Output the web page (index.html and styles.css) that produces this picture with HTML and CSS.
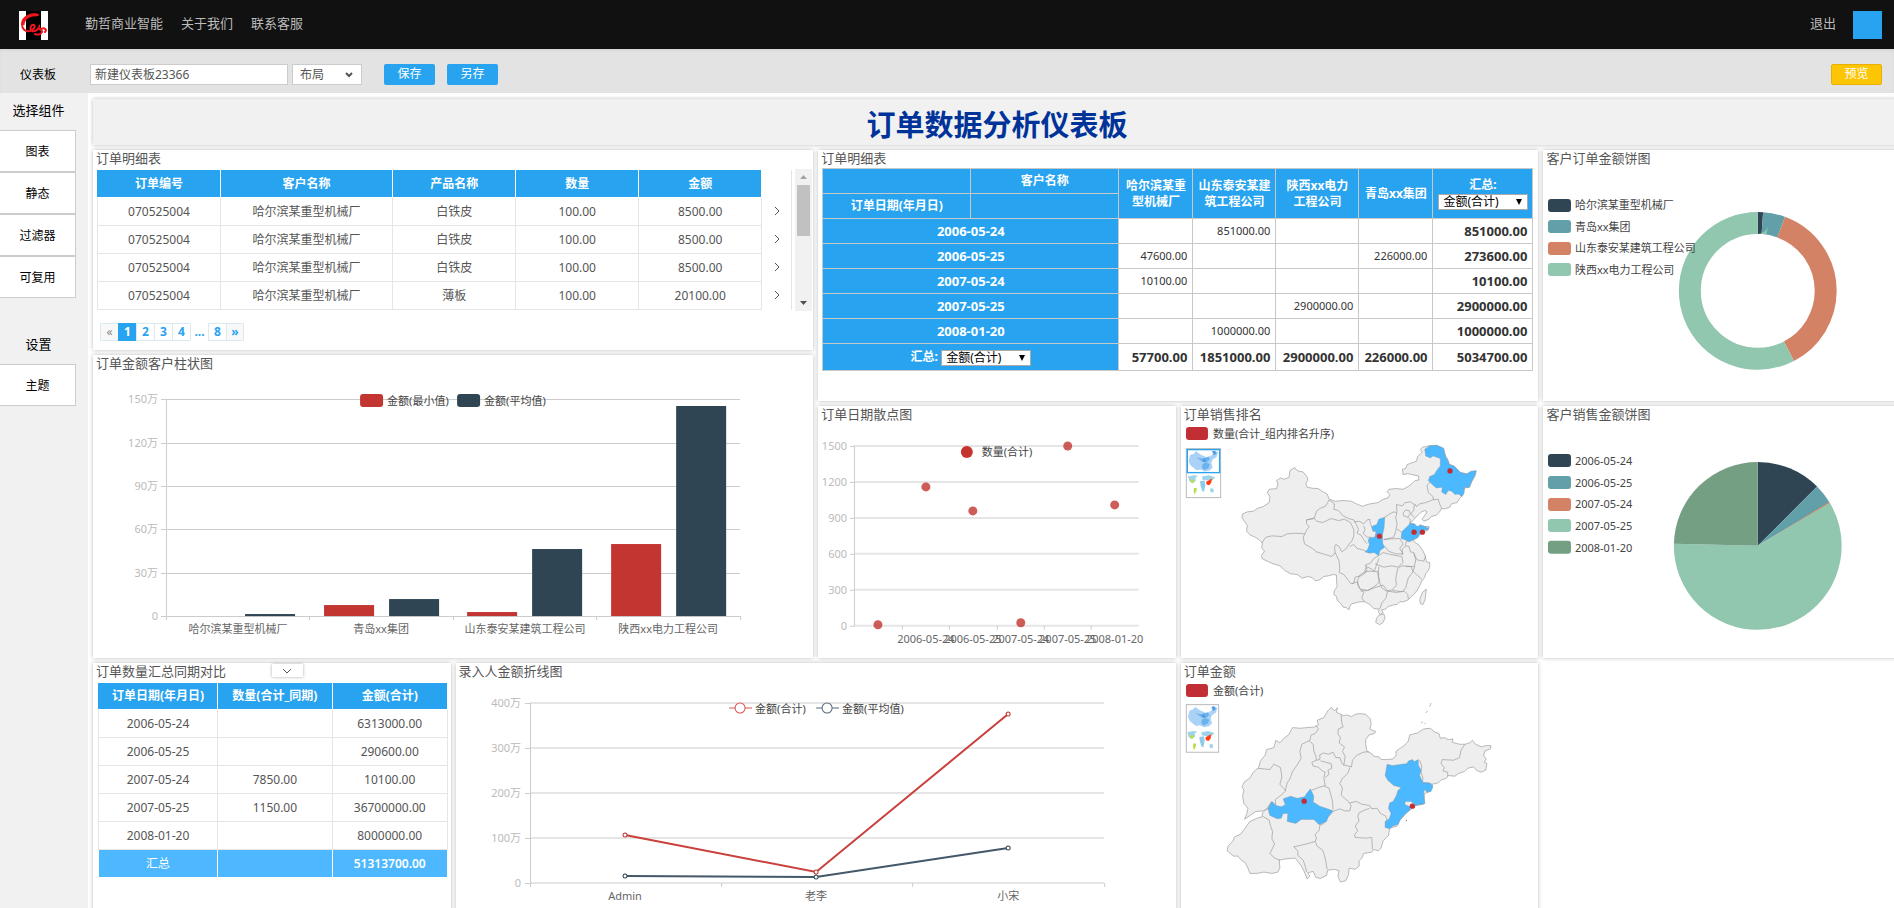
FILE: index.html
```html
<!DOCTYPE html>
<html lang="zh-CN">
<head>
    <meta charset="UTF-8">
    <meta name="viewport" content="width=device-width, initial-scale=1.0">
    <title>订单数据分析仪表板</title>
    <link rel="stylesheet" href="styles.css">
</head>
<body>
    <!-- Header -->
    <header class="topbar">
        <a class="logo" href="#" aria-label="首页">
            <svg width="29" height="29" viewBox="0 0 29 29">
                <rect width="29" height="29" fill="#fff"/>
                <rect x="7" width="15" height="29" fill="#000"/>
                <path d="M19 4C12 2 3 6 3 13C3 18 6 21 11 20C14 19 17 16 15 14C12 13 10 18 13 20C16 21 20 18 20 16C18 19 24 18 23 21C22 24 18 24 16 23M22 18C26 16 28 19 26 21" fill="none" stroke="#f0141c" stroke-width="2" stroke-linecap="round"/>
                <path d="M18 4C11 3 4 7 4 14" fill="none" stroke="#f0141c" stroke-width="3"/>
            </svg>
        </a>
        <nav class="topnav">
            <a href="#">勤哲商业智能</a>
            <a href="#">关于我们</a>
            <a href="#">联系客服</a>
        </nav>
        <a class="logout" href="#">退出</a>
        <span class="avatar"></span>
    </header>

    <!-- Toolbar -->
    <div class="toolbar">
        <label class="toolbar-label" for="board-name">仪表板</label>
        <input class="board-name" type="text" id="board-name" value="新建仪表板23366">
        <span class="layout-box">
            <select class="layout-select" aria-label="布局">
                <option>布局</option>
            </select>
            <svg class="layout-arrow" width="8" height="6" viewBox="0 0 8 6"><path d="M1 1l3 3 3-3" fill="none" stroke="#555" stroke-width="2"/></svg>
        </span>
        <button class="btn btn-save">保存</button>
        <button class="btn">另存</button>
        <button class="btn btn-preview">预览</button>
    </div>

    <div class="workspace">
        <!-- Sidebar -->
        <aside class="sidebar">
            <h2>选择组件</h2>
            <button>图表</button>
            <button>静态</button>
            <button>过滤器</button>
            <button>可复用</button>
            <h2 class="settings">设置</h2>
            <button>主题</button>
        </aside>

        <!-- Dashboard -->
        <main>
            <div class="board">
                <section class="panel board-title">
                    <h1>订单数据分析仪表板</h1>
                </section>

                <!-- Order details -->
                <section class="panel orders">
                    <h3>订单明细表</h3>
                    <div class="scroll-area">
                        <div class="scroll-body">
                            <table class="list order-list">
                                <colgroup><col class="c-no"><col class="c-customer"><col class="c-no"><col class="c-no"><col class="c-no"><col class="c-more"></colgroup>
                                <thead>
                                    <tr><th>订单编号</th><th>客户名称</th><th>产品名称</th><th>数量</th><th>金额</th><td></td></tr>
                                </thead>
                                <tbody>
                                    <tr><td>070525004</td><td>哈尔滨某重型机械厂</td><td>白铁皮</td><td>100.00</td><td>8500.00</td><td class="more"><svg width="6" height="10" viewBox="0 0 6 10"><path d="M1 1l4 4-4 4"/></svg></td></tr>
                                    <tr><td>070525004</td><td>哈尔滨某重型机械厂</td><td>白铁皮</td><td>100.00</td><td>8500.00</td><td class="more"><svg width="6" height="10" viewBox="0 0 6 10"><path d="M1 1l4 4-4 4"/></svg></td></tr>
                                    <tr><td>070525004</td><td>哈尔滨某重型机械厂</td><td>白铁皮</td><td>100.00</td><td>8500.00</td><td class="more"><svg width="6" height="10" viewBox="0 0 6 10"><path d="M1 1l4 4-4 4"/></svg></td></tr>
                                    <tr><td>070525004</td><td>哈尔滨某重型机械厂</td><td>薄板</td><td>100.00</td><td>20100.00</td><td class="more"><svg width="6" height="10" viewBox="0 0 6 10"><path d="M1 1l4 4-4 4"/></svg></td></tr>
                                </tbody>
                            </table>
                        </div>
                        <div class="scrollbar">
                            <svg width="7" height="4" viewBox="0 0 7 4"><path d="M0 4L3.500 0 7 4z" fill="#a3a3a3"/></svg>
                            <div class="thumb"></div>
                            <svg width="7" height="4" viewBox="0 0 7 4"><path d="M0 0L3.500 4 7 0z" fill="#505050"/></svg>
                        </div>
                    </div>
                    <nav class="pager">
                        <a class="edge" href="#">«</a>
                        <a class="active" href="#">1</a>
                        <a href="#">2</a>
                        <a href="#">3</a>
                        <a href="#">4</a>
                        <span>...</span>
                        <a href="#">8</a>
                        <a class="edge-next" href="#">»</a>
                    </nav>
                </section>

                <!-- Pivot table -->
                <section class="panel pivot">
                    <h3>订单明细表</h3>
                    <table class="pivot-table">
                        <colgroup><col class="p-head"><col class="p-head"><col class="p-a"><col class="p-b"><col class="p-b"><col class="p-a"><col class="p-sum"></colgroup>
                        <thead>
                            <tr>
                                <th></th><th>客户名称</th>
                                <th rowspan="2">哈尔滨某重型机械厂</th><th rowspan="2">山东泰安某建筑工程公司</th><th rowspan="2">陕西xx电力工程公司</th><th rowspan="2">青岛xx集团</th>
                                <th rowspan="2"><label for="col-sum">汇总:</label>
                                    <span class="sum-box"><select id="col-sum"><option>金额(合计)</option></select></span></th>
                            </tr>
                            <tr><th>订单日期(年月日)</th><th></th></tr>
                        </thead>
                        <tbody>
                            <tr><th colspan="2">2006-05-24</th><td></td><td>851000.00</td><td></td><td></td><td class="sum">851000.00</td></tr>
                            <tr><th colspan="2">2006-05-25</th><td>47600.00</td><td></td><td></td><td>226000.00</td><td class="sum">273600.00</td></tr>
                            <tr><th colspan="2">2007-05-24</th><td>10100.00</td><td></td><td></td><td></td><td class="sum">10100.00</td></tr>
                            <tr><th colspan="2">2007-05-25</th><td></td><td></td><td>2900000.00</td><td></td><td class="sum">2900000.00</td></tr>
                            <tr><th colspan="2">2008-01-20</th><td></td><td>1000000.00</td><td></td><td></td><td class="sum">1000000.00</td></tr>
                            <tr class="total">
                                <th colspan="2"><label for="row-sum">汇总:</label>
                                    <span class="sum-box"><select id="row-sum"><option>金额(合计)</option></select></span></th>
                                <td class="sum">57700.00</td><td class="sum">1851000.00</td><td class="sum">2900000.00</td><td class="sum">226000.00</td><td class="sum">5034700.00</td>
                            </tr>
                        </tbody>
                    </table>
                </section>

                <!-- Donut chart -->
                <section class="panel donut">
                    <h3>客户订单金额饼图</h3>
                    <svg class="chart" viewBox="0 0 358 232">
                        <g class="ring" transform="rotate(-90 215 123)" stroke-width="22">
                            <circle cx="215" cy="123" r="68" pathLength="1000" stroke="#2f4554" stroke-dasharray="11 989"/>
                            <circle cx="215" cy="123" r="68" pathLength="1000" stroke="#61a0a8" stroke-dasharray="45 955" stroke-dashoffset="-11"/>
                            <circle cx="215" cy="123" r="68" pathLength="1000" stroke="#d48265" stroke-dasharray="368 632" stroke-dashoffset="-56"/>
                            <circle cx="215" cy="123" r="68" pathLength="1000" stroke="#91c7ae" stroke-dasharray="576 424" stroke-dashoffset="-424"/>
                        </g>
                        <rect x="5" y="31" width="23" height="13" rx="3" fill="#2f4554"/>
                        <text x="32" y="41">哈尔滨某重型机械厂</text>
                        <rect x="5" y="52" width="23" height="13" rx="3" fill="#61a0a8"/>
                        <text x="32" y="63">青岛xx集团</text>
                        <rect x="5" y="74" width="23" height="13" rx="3" fill="#d48265"/>
                        <text x="32" y="84">山东泰安某建筑工程公司</text>
                        <rect x="5" y="95" width="23" height="13" rx="3" fill="#91c7ae"/>
                        <text x="32" y="106">陕西xx电力工程公司</text>
                    </svg>
                </section>

                <!-- Bar chart -->
                <section class="panel bars">
                    <h3>订单金额客户柱状图</h3>
                    <svg class="chart" viewBox="0 0 720 284">
                        <path class="grid" d="M68 26.500H647M68 70.500H647M68 113.500H647M68 156.500H647M68 200.500H647"/>
                        <path class="axis" d="M73.500 26V247M68 243.500H647.500V247M216.500 243V247M360.500 243V247M503.500 243V247"/>
                        <g class="y-labels">
                            <text x="65" y="30">150万</text>
                            <text x="65" y="74">120万</text>
                            <text x="65" y="117">90万</text>
                            <text x="65" y="160">60万</text>
                            <text x="65" y="204">30万</text>
                            <text x="65" y="247">0</text>
                        </g>
                        <g fill="#c23531">
                            <rect x="231" y="232" width="50" height="11"/>
                            <rect x="374" y="239" width="50" height="4"/>
                            <rect x="518" y="171" width="50" height="72"/>
                        </g>
                        <g fill="#2f4554">
                            <rect x="152" y="241" width="50" height="2"/>
                            <rect x="296" y="226" width="50" height="17"/>
                            <rect x="439" y="176" width="50" height="67"/>
                            <rect x="583" y="33" width="50" height="210"/>
                        </g>
                        <g class="x-labels">
                            <text x="145" y="260">哈尔滨某重型机械厂</text>
                            <text x="288" y="260">青岛xx集团</text>
                            <text x="432" y="260">山东泰安某建筑工程公司</text>
                            <text x="575" y="260">陕西xx电力工程公司</text>
                        </g>
                        <rect x="267" y="21" width="23" height="13" rx="3" fill="#c23531"/>
                        <text x="294" y="32">金额(最小值)</text>
                        <rect x="364" y="21" width="23" height="13" rx="3" fill="#2f4554"/>
                        <text x="391" y="32">金额(平均值)</text>
                    </svg>
                </section>

                <!-- Scatter chart -->
                <section class="panel scatter">
                    <h3>订单日期散点图</h3>
                    <svg class="chart" viewBox="0 0 358 234">
                        <path class="grid soft" d="M36 22H321M36 58H321M36 94H321M36 130H321M36 166H321M36 202H321"/>
                        <path class="axis" d="M36.500 22V202M32 22.500H36M32 58.500H36M32 94.500H36M32 130.500H36M32 166.500H36M32 202.500H36M84.500 202V206M131.500 202V206M179.500 202V206M226.500 202V206M273.500 202V206"/>
                        <g class="y-labels">
                            <text x="29" y="26">1500</text>
                            <text x="29" y="62">1200</text>
                            <text x="29" y="98">900</text>
                            <text x="29" y="134">600</text>
                            <text x="29" y="170">300</text>
                            <text x="29" y="206">0</text>
                        </g>
                        <g class="x-labels">
                            <text x="108" y="219">2006-05-24</text>
                            <text x="155" y="219">2006-05-25</text>
                            <text x="203" y="219">2007-05-24</text>
                            <text x="250" y="219">2007-05-25</text>
                            <text x="297" y="219">2008-01-20</text>
                        </g>
                        <g fill="#c23531" fill-opacity=".8">
                            <circle cx="60" cy="201" r="4.500"/>
                            <circle cx="108" cy="63" r="4.500"/>
                            <circle cx="155" cy="87" r="4.500"/>
                            <circle cx="203" cy="199" r="4.500"/>
                            <circle cx="250" cy="22" r="4.500"/>
                            <circle cx="297" cy="81" r="4.500"/>
                        </g>
                        <circle cx="149" cy="28" r="6" fill="#c23531"/>
                        <text x="164" y="32">数量(合计)</text>
                    </svg>
                </section>

                <!-- China map -->
                <section class="panel china">
                    <h3>订单销售排名</h3>
                    <svg class="chart" viewBox="0 0 358 234">
                        <defs>
                            <g id="map-thumb">
                                <path d="M60 165l12-4 6-8 12 10 22 10 14-8 8-14 10 6-4 14-12 8-4 10 4 14-8 8-16 4-12-6-12 2-18-14-6-12z" fill="#a9d2f6"/>
                                <path d="M78 172l14 4 12-2 12-4 4 8-10 10-12-2zM98 192l10-4 12 4-4 12-12 6-8-6z" fill="#6cb2ee"/>
                                <path d="M126 154l8-2 6 8-8 6zM98 178l8-2 2 8-8 4z" fill="#4f9de3"/>
                                <path d="M54 230l18-4 12 2-8 6 2 8-12 8-8-6zM96 230l20-4 20 6-8 8-14 2-16-2z" fill="#9fd3ea"/>
                                <path d="M62 238l10 2 2 6-6 4-6-6zM72 264l8 0 0 8-6 12-3-10z" fill="#b5e04a"/>
                                <path d="M90 244l14-2 2 14-4 20-6-4-4-14z" fill="#8ccbe9"/>
                                <path d="M120 266l10 0 2 10-10 2z" fill="#9fd3ea"/>
                                <path d="M108 246l10-6 8-4-2 12-6 8-8-2z" fill="#ff3c14"/>
                            </g>
                        </defs>
                        <rect x="5" y="3" width="22" height="13" rx="3" fill="#c12e34"/>
                        <text x="32" y="14">数量(合计_组内排名升序)</text>
                        <g transform="translate(-11 -24) scale(.3333)">
                            <rect class="thumb-frame" x="49" y="146" width="103" height="147"/>
                            <rect class="thumb-active" x="52" y="149" width="97" height="69"/>
                            <use href="#map-thumb"/>
                            <path class="land" d="M375 203L380 210 388 214 400 216 412 231 414 242 408 250 412 262 428 265 445 266 460 276 472 282 478 298 496 304 520 302 545 304 560 312 578 319 600 312 625 308 640 298 655 294 660 284 652 275 658 268 678 266 700 268 715 260 728 250 736 242 748 240 746 228 726 224 715 221 700 224 698 208 708 206 712 194 728 188 740 184 744 170 752 162 758 156 752 148 758 142 768 140 778 137 800 136 822 146 828 170 834 178 838 192 855 200 872 218 895 222 920 213 916 228 906 246 900 262 885 264 882 282 876 290 870 296 862 308 845 312 840 322 828 326 815 327 808 338 800 346 785 350 778 358 762 364 757 358 764 348 772 336 766 332 755 336 746 345 738 352 730 362 720 370 736 374 744 384 752 374 760 380 778 380 776 390 764 396 750 400 744 412 730 420 736 428 748 436 758 450 766 466 770 486 780 488 780 500 776 512 768 522 764 534 756 544 750 558 742 572 734 582 722 594 712 602 700 606 690 606 682 614 670 616 655 620 648 628 636 630 640 638 632 644 626 638 628 628 612 626 600 614 585 606 570 606 556 610 546 612 540 620 538 630 530 624 520 622 512 610 502 602 500 590 492 584 494 572 502 560 500 540 500 526 490 524 476 528 462 530 450 540 436 543 428 534 416 530 396 535 382 524 362 522 345 512 330 498 310 492 292 484 276 476 275 466 284 454 275 444 278 430 268 420 256 412 240 405 230 394 232 376 222 362 216 352 218 342 232 336 250 334 262 326 280 320 298 308 300 290 292 278 298 268 320 266 324 252 320 242 332 234 344 238 358 232 360 212Z"/>
                            <!-- province borders -->
                            <path class="border" d="M478 300L468 318 450 326 440 334 434 354 410 360 410 372 418 380 410 392 405 402M275 430L288 412 306 408 336 410 352 402 378 400 405 402M405 402L400 412 404 432 428 446 440 456 466 464 486 470 496 458 494 442 498 434M410 360L434 356 440 364 458 368 484 356 506 362 524 358 542 368 552 388 552 408 546 424 538 432 530 446 516 456 508 440 498 434"/>
                            <path class="border" d="M478 300L494 312 492 328 506 332 520 348 536 356 552 360 560 374 566 388 562 400 574 406 582 420 592 432M552 366L568 364 582 372 592 360 600 358 602 372 606 380M582 378L586 390 580 400 592 412 604 412M540 440L552 434 562 446 586 452M496 458L508 484 510 508 508 518 522 524 536 542 544 552 552 550 556 532 574 528 586 520 592 508 586 496 602 490 612 476 628 467"/>
                            <path class="border" d="M645 352L660 342 672 336 682 338 678 352 682 372 678 394 672 412 642 420M682 336L680 314 698 318 706 308 722 306 734 314 732 330 724 342 734 352M700 340L708 330 718 332 722 342 714 352 702 348ZM714 352L722 360 720 370M682 388L694 396M642 418L690 416 700 432 690 446 700 462 678 462 656 454 646 440M736 312L740 320 750 312 768 308 784 302 792 298"/>
                            <path class="border" d="M782 246L772 256 776 278 790 290 792 300 806 298 810 312 816 326M630 466L640 458 662 464 696 470 700 488 684 502 666 498 642 502 616 492M628 500L624 522 630 548 636 564 650 574 668 570 680 556 678 536 684 506 696 498 724 500 730 516 716 534 708 564 698 576 668 572"/>
                            <path class="border" d="M698 466L698 448 708 438 718 440 722 456 732 458 738 480 734 500 708 500M706 438L710 424 728 422M732 460L742 480 762 484 768 468M735 500L730 514 740 524 756 538M564 540L570 526 586 516 602 514 626 516 628 548 614 560 594 572 572 568 564 556ZM546 552L562 546 570 566 582 578 576 594 584 606M572 574L594 572 614 564 640 556 654 574 648 596 636 610 630 628M654 574L680 578 704 574 714 584 716 598M584 516L590 500 606 508 614 514 620 496 628 476"/>
                            <path class="land" d="M770 568L758 578 750 600 752 612 760 614 766 600ZM642 642L628 646 620 656 618 668 630 675 640 668 646 654Z"/>
                            <path class="hit" d="M765 148L779 138 801 136 821 144 827 168 835 182 839 194 853 198 865 210 873 218 891 222 903 214 919 212 915 228 905 246 899 262 884 263 882 281 876 290 866 282 856 284 846 274 836 272 828 284 816 276 818 262 800 264 790 256 776 242 780 230 794 224 802 210 812 198 812 176 790 168 782 174 768 168ZM645 352L627 358 621 374 605 380 609 394 619 396 615 412 599 414 595 422 599 434 593 450 585 456 599 460 613 458 627 468 631 452 645 442 639 432 638 406 643 384ZM694 416L696 396 710 382 722 370 734 372 742 380 752 376 762 378 772 384 778 384 774 390 758 392 750 404 744 414 726 422 718 426 706 420Z"/>
                            <g fill="#c12e34"><circle cx="841" cy="213" r="8"/><circle cx="733" cy="397" r="8"/><circle cx="758" cy="397" r="8"/><circle cx="629" cy="409" r="8"/></g>
                        </g>
                    </svg>
                </section>

                <!-- Pie chart -->
                <section class="panel pie">
                    <h3>客户销售金额饼图</h3>
                    <svg class="chart" viewBox="0 0 358 234">
                        <g class="ring" transform="rotate(-90 215 122)" stroke-width="84">
                            <circle cx="215" cy="122" r="42" pathLength="1000" stroke="#2f4554" stroke-dasharray="125 875"/>
                            <circle cx="215" cy="122" r="42" pathLength="1000" stroke="#61a0a8" stroke-dasharray="38 962" stroke-dashoffset="-125"/>
                            <circle cx="215" cy="122" r="42" pathLength="1000" stroke="#d48265" stroke-dasharray="3 997" stroke-dashoffset="-162"/>
                            <circle cx="215" cy="122" r="42" pathLength="1000" stroke="#91c7ae" stroke-dasharray="590 410" stroke-dashoffset="-164"/>
                            <circle cx="215" cy="122" r="42" pathLength="1000" stroke="#749f83" stroke-dasharray="246 754" stroke-dashoffset="-754"/>
                        </g>
                        <rect x="5" y="30" width="23" height="13" rx="3" fill="#2f4554"/>
                        <text x="32" y="41">2006-05-24</text>
                        <rect x="5" y="52" width="23" height="13" rx="3" fill="#61a0a8"/>
                        <text x="32" y="63">2006-05-25</text>
                        <rect x="5" y="74" width="23" height="13" rx="3" fill="#d48265"/>
                        <text x="32" y="84">2007-05-24</text>
                        <rect x="5" y="95" width="23" height="13" rx="3" fill="#91c7ae"/>
                        <text x="32" y="106">2007-05-25</text>
                        <rect x="5" y="117" width="23" height="13" rx="3" fill="#749f83"/>
                        <text x="32" y="128">2008-01-20</text>
                    </svg>
                </section>

                <!-- Period comparison -->
                <section class="panel compare">
                    <h3>订单数量汇总同期对比</h3>
                    <button class="expand" aria-label="展开">
                        <svg width="10" height="6" viewBox="0 0 10 6"><path d="M1 1l4 4 4-4" fill="none" stroke="#555"/></svg>
                    </button>
                    <table class="list compare-list">
                        <colgroup><col class="k-date"><col><col></colgroup>
                        <thead>
                            <tr><th>订单日期(年月日)</th><th>数量(合计_同期)</th><th>金额(合计)</th></tr>
                        </thead>
                        <tbody>
                            <tr><td>2006-05-24</td><td></td><td>6313000.00</td></tr>
                            <tr><td>2006-05-25</td><td></td><td>290600.00</td></tr>
                            <tr><td>2007-05-24</td><td>7850.00</td><td>10100.00</td></tr>
                            <tr><td>2007-05-25</td><td>1150.00</td><td>36700000.00</td></tr>
                            <tr><td>2008-01-20</td><td></td><td>8000000.00</td></tr>
                        </tbody>
                        <tfoot>
                            <tr><td>汇总</td><td></td><td>51313700.00</td></tr>
                        </tfoot>
                    </table>
                </section>

                <!-- Line chart -->
                <section class="panel lines">
                    <h3>录入人金额折线图</h3>
                    <svg class="chart" viewBox="0 0 720 233">
                        <path class="grid soft" d="M74 22H648M74 67H648M74 112H648M74 157H648M74 202H648"/>
                        <path class="axis" d="M74.500 22V206M69 22.500H74M69 67.500H74M69 112.500H74M69 157.500H74M69 202.500H74M265.500 202V206M456.500 202V206M648.500 202V206"/>
                        <g class="y-labels">
                            <text x="65" y="26">400万</text>
                            <text x="65" y="71">300万</text>
                            <text x="65" y="116">200万</text>
                            <text x="65" y="161">100万</text>
                            <text x="65" y="206">0</text>
                        </g>
                        <g class="x-labels">
                            <text x="169" y="219">Admin</text>
                            <text x="360" y="219">老李</text>
                            <text x="552" y="219">小宋</text>
                        </g>
                        <path class="line" stroke="#c9403c" d="M169 154L360 191 552 33"/>
                        <path class="line" stroke="#44586a" d="M169 195L360 196 552 167"/>
                        <g fill="#fff" stroke="#c23531"><circle cx="169" cy="154" r="2"/><circle cx="360" cy="191" r="2"/><circle cx="552" cy="33" r="2"/></g>
                        <g fill="#fff" stroke="#2f4554"><circle cx="169" cy="195" r="2"/><circle cx="360" cy="196" r="2"/><circle cx="552" cy="167" r="2"/></g>
                        <g fill="#fff" stroke="#d9534f"><path d="M273 27H296"/><circle cx="284" cy="27" r="5"/></g>
                        <text x="299" y="32">金额(合计)</text>
                        <g fill="#fff" stroke="#55697a"><path d="M360 27H383"/><circle cx="371" cy="27" r="5"/></g>
                        <text x="386" y="32">金额(平均值)</text>
                    </svg>
                </section>

                <!-- Shandong map -->
                <section class="panel shandong">
                    <h3>订单金额</h3>
                    <svg class="chart" viewBox="0 0 358 233">
                        <rect x="5" y="3" width="22" height="13" rx="3" fill="#c12e34"/>
                        <text x="32" y="14">金额(合计)</text>
                        <g transform="translate(-11 -26) scale(.3333)">
                            <rect class="thumb-frame" x="49" y="149" width="97" height="143"/>
                            <use href="#map-thumb" x="-2" y="2"/>
                            <path class="land" d="M484 157L494 168 503 158 500 172 514 178 520 182 532 180 545 185 556 178 570 176 588 178 602 192 604 208 600 222 618 230 614 236 598 240 588 254 588 272 592 290 606 296 612 304 628 306 634 314 656 314 670 312 680 300 678 290 692 280 706 270 716 258 720 240 744 234 762 222 782 220 796 232 808 236 812 250 824 248 836 254 850 252 848 262 870 268 886 268 900 264 908 256 918 268 936 276 948 272 964 272 962 282 946 288 942 302 950 312 944 322 952 326 948 346 934 352 920 346 912 336 894 340 884 350 866 356 856 364 836 362 830 370 814 376 806 384 788 388 786 402 776 412 764 416 762 448 736 452 726 462 712 472 700 486 686 500 682 514 660 520 656 542 640 558 634 580 626 588 612 584 606 592 582 596 576 610 568 618 568 634 556 644 538 640 536 660 528 678 512 682 504 664 508 648 494 644 474 646 470 662 452 671 438 668 430 650 414 654 420 664 412 673 402 648 392 630 376 610 350 612 328 616 330 640 324 652 306 656 282 652 262 656 240 656 234 640 226 624 212 614 204 604 190 604 172 588 174 574 188 560 194 546 212 538 230 514 240 500 262 490 276 486 278 474 290 462 304 442 300 458 280 468 258 470 240 482 224 493 230 478 234 460 222 446 218 424 222 406 216 396 224 380 240 370 250 352 266 338 272 318 286 300 290 284 312 278 318 256 330 264 344 248 356 240 368 218 390 220 412 218 434 216 446 210 442 196 462 188 474 168Z"/>
                            <!-- city borders -->
                            <path class="border" d="M514 180L516 204 520 216 506 222 504 236 512 248 508 264 524 276 518 290 526 304 522 330 545 336M438 212L446 222 436 236 424 240 420 256 396 268 390 290 394 310 382 330 368 350 360 372 352 384 346 408M264 340L300 344 312 328 332 338 336 366 330 388 348 408 330 424 316 434 318 452 306 440M418 258L430 268 432 288 438 304 440 316 426 322 430 334 444 336 458 348 466 352 462 368 466 392 446 398 426 406M440 316L450 314 450 300 460 294 476 298 490 292 498 308 510 308 516 324 522 332M452 318L468 322 484 326 486 340 474 346 478 358 466 368"/>
                            <path class="border" d="M464 394L478 400 482 416 488 440 490 464M540 338L534 356 518 370 510 386 518 400 514 420 526 432 536 440 544 452 540 468 524 468 510 462 490 470M545 336L548 316 560 302 580 292 598 290M540 444L560 440 576 448 600 452 606 462 622 460 632 476 648 484 652 498M600 460L584 466 568 474 564 484 568 498 556 514 564 528 554 540 556 548 590 550 606 548 608 584M490 470L472 490 462 506 450 512 448 526 436 540 440 550 436 560 408 568 372 576 384 588 384 602 400 616 408 640 410 652M436 560L442 574 458 586 464 602 468 620 472 644"/>
                            <path class="border" d="M278 484L298 496 302 514 308 530 306 552 314 568 300 596 314 610 330 616M750 316L756 334 754 352 760 370 758 382 788 388M886 268L874 286 870 308 852 316 818 314 814 326 824 338 820 348 834 352 834 364M780 155L784 144M768 174L774 168M754 204L760 200M764 208L768 204"/>
                            <path class="hit" d="M652 328L668 332 712 326 716 318 728 314 734 320 746 314 746 330 754 346 750 362 760 384 780 384 790 394 784 410 772 412 764 404 762 416 766 446 738 452 724 440 706 440 706 450 722 456 720 466 704 480 692 494 686 508 668 514 660 522 646 518 646 500 658 492 664 476 656 460 660 444 670 440 680 422 684 408 694 398 672 392 654 376 646 362ZM422 402L412 414 404 426 382 430 362 424 340 432 346 450 334 456 318 452 306 440 294 462 300 482 322 492 334 490 340 476 354 476 352 500 378 506 394 494 432 494 448 510 470 500 476 484 490 468 468 460 450 454 438 446 430 442 432 424Z"/>
                            <circle cx="710" cy="497" r="2" fill="#888"/>
                            <g fill="#c12e34"><circle cx="403" cy="439" r="8"/><circle cx="728" cy="454" r="8"/></g>
                        </g>
                    </svg>
                </section>
            </div>
        </main>
    </div>
</body>
</html>
```
FILE: styles.css
```css
/* Global Styles */
* {
    box-sizing: border-box;
}

body {
    display: flex;
    flex-direction: column;
    height: 100vh;
    margin: 0;
    overflow: hidden;
    font-family: "Noto Sans", "Noto Sans CJK SC", sans-serif;
    font-size: 12px;
    color: #555;
    background-color: #fff;
}

button,
input,
select {
    font: inherit;
}

a {
    text-decoration: none;
}

/* Header */
.topbar {
    display: flex;
    flex: none;
    align-items: center;
    height: 49px;
    padding: 0 12px 0 19px;
    background-color: #111;
}

.logo {
    margin-top: 2px;
    line-height: 0;
}

.topnav {
    display: flex;
    gap: 18px;
    margin-left: 37px;
}

.topnav a,
.logout {
    padding-bottom: 4px;
    font-size: 13px;
    line-height: 20px;
    color: #bbb;
}

.logout {
    margin-left: auto;
}

.avatar {
    width: 29px;
    height: 28px;
    margin-left: 17px;
    background-color: #28a3ef;
}

/* Toolbar */
.toolbar {
    display: flex;
    flex: none;
    align-items: center;
    height: 44px;
    padding: 6px 12px 0 20px;
    background-color: #e3e3e3;
    box-shadow: inset 0 2px 2px #d8d8d8;
}

.toolbar-label {
    width: 70px;
    color: #000;
}

.board-name {
    width: 198px;
    height: 21px;
    margin-right: 4px;
    padding: 0 4px;
    border: 1px solid #ccc;
    color: #555;
}

.layout-box {
    position: relative;
    width: 70px;
    height: 21px;
    margin-right: 22px;
}

.layout-select {
    width: 100%;
    height: 100%;
    padding: 0 7px;
    border: 1px solid #ccc;
    background-color: #fff;
    color: #555;
    appearance: none;
}

.layout-arrow {
    position: absolute;
    right: 9px;
    top: 8px;
}

.btn {
    width: 51px;
    height: 21px;
    margin-right: 12px;
    padding: 0;
    border: none;
    border-radius: 2px;
    background-color: #28a3ef;
    line-height: 20px;
    color: #fff;
    cursor: pointer;
}

.btn-preview {
    margin: 0 0 0 auto;
    border: 1px solid #e8b000;
    background-color: #fdc503;
    line-height: 18px;
}

/* Sidebar */
.workspace {
    display: flex;
    flex: 1;
    min-height: 0;
}

.sidebar {
    flex: none;
    width: 88px;
    padding-top: 7px;
    background-color: #f1f1f1;
}

.sidebar h2 {
    width: 77px;
    margin: 0 0 10px;
    font-size: 13px;
    font-weight: normal;
    line-height: 20px;
    text-align: center;
    color: #000;
}

.sidebar .settings {
    margin-top: 36px;
}

.sidebar button {
    display: block;
    width: 76px;
    height: 42px;
    padding: 0;
    border: 1px solid #ccc;
    border-left: none;
    background-color: #fff;
    color: #000;
}

/* Dashboard grid */
main {
    flex: 1;
    min-width: 0;
    overflow: hidden;
}

.board {
    display: grid;
    grid-template-columns: repeat(5, minmax(0, 1fr));
    grid-template-rows: 46px 200px 46px 252px 251px;
    gap: 5px;
    width: calc(100% + 2px);
    margin: 6px 0 0 5px;
}

.panel {
    position: relative;
    background-color: #fff;
    box-shadow: 0 0 4px #bbb;
}

.panel h3 {
    margin: 0;
    padding: 0 0 1px 3px;
    font-size: 13px;
    font-weight: normal;
    line-height: 17px;
    color: #555;
}

.board-title {
    grid-column: 1 / 6;
    background-color: #f1f1f1;
}

.board-title h1 {
    margin: 0;
    font-size: 29px;
    line-height: 52px;
    text-align: center;
    color: #003399;
}

.orders {
    grid-area: 2 / 1 / 3 / 3;
}

.pivot {
    grid-area: 2 / 3 / 4 / 5;
}

.donut {
    grid-area: 2 / 5 / 4 / 6;
}

.bars {
    grid-area: 3 / 1 / 5 / 3;
}

.scatter {
    grid-area: 4 / 3;
}

.china {
    grid-area: 4 / 4;
}

.pie {
    grid-area: 4 / 5;
}

.compare {
    grid-area: 5 / 1;
}

.lines {
    grid-area: 5 / 2 / 6 / 4;
}

.shandong {
    grid-area: 5 / 4;
}

/* List tables */
.list {
    border-collapse: collapse;
    table-layout: fixed;
    line-height: 18px;
    text-align: center;
}

.list th {
    height: 27px;
    padding: 0;
    border: 1px solid #fff;
    border-left-color: #28a3ef;
    background-color: #28a3ef;
    color: #fff;
}

.list th + th {
    border-left-color: #fff;
}

.list td {
    height: 28px;
    padding: 0;
    border: 1px solid #e5e5e5;
}

.scroll-area {
    display: flex;
    height: 143px;
    padding: 1px 1px 0 4px;
}

.scroll-body {
    flex: 1;
    overflow: hidden;
}

.order-list {
    width: 100%;
}

.c-no {
    width: 123px;
}

.c-more {
    width: 30px;
}

.order-list td:last-child {
    border-top: none;
    border-bottom: none;
}

.more path {
    fill: none;
    stroke: #555;
}

.scrollbar {
    display: flex;
    flex-direction: column;
    align-items: center;
    width: 17px;
    margin-left: 3px;
    padding: 6px 0;
    background-color: #f1f1f1;
}

.thumb {
    width: 13px;
    height: 51px;
    margin: 6px 0 auto;
    background-color: #c1c1c1;
}

.pager {
    display: flex;
    margin: 12px 0 0 7px;
    font-weight: bold;
    line-height: 16px;
    text-align: center;
}

.pager a,
.pager span {
    width: 18px;
    border: 1px solid #dce9ee;
    border-right: none;
    color: #28a3ef;
}

.pager span {
    border-top-color: #fff;
    border-bottom-color: #fff;
}

.pager .active {
    background-color: #28a3ef;
    border-color: #28a3ef;
    color: #fff;
}

.pager .edge {
    background-color: #f8f8f8;
    font-weight: normal;
    color: #888;
}

.pager .edge-next {
    border-right: 1px solid #dce9ee;
    background-color: #f8f8f8;
}

/* Pivot table */
.pivot-table {
    width: calc(100% - 9px);
    margin: 0 0 0 4px;
    border-collapse: collapse;
    table-layout: fixed;
    line-height: 16px;
}

.p-a {
    width: 74px;
}

.p-b {
    width: 83px;
}

.p-sum {
    width: 100px;
}

.pivot-table th,
.pivot-table td {
    height: 25px;
    padding: 0 5px;
    border: 1px solid #c8c8c8;
}

.pivot-table th {
    background-color: #28a3ef;
    color: #fff;
}

.pivot-table tbody th,
.pivot-table .sum {
    font-size: 13px;
}

.pivot-table td {
    font-size: 11px;
    text-align: right;
    color: #333;
}

.pivot-table .sum {
    font-weight: bold;
    white-space: nowrap;
}

.pivot-table .total th,
.pivot-table .total td {
    height: 27px;
}

.total label {
    font-size: 12px;
}

.sum-box {
    position: relative;
    display: inline-block;
    vertical-align: middle;
}

.sum-box select {
    display: block;
    width: 90px;
    height: 16px;
    padding: 0 4px;
    border: 1px solid #aaa;
    background-color: #fff;
    font-size: 12px;
    font-weight: normal;
    line-height: 14px;
    color: #000;
    appearance: none;
}

.sum-box::after {
    content: "";
    position: absolute;
    right: 6px;
    top: 5px;
    border: 3px solid transparent;
    border-top: 6px solid #000;
    border-bottom: none;
}

/* Comparison table */
.compare-list {
    width: calc(100% - 8px);
    margin: 1px 0 0 5px;
}

.k-date {
    width: 119px;
}

.compare-list tfoot td {
    border-color: #fff;
    background-color: #4db8ff;
    color: #fff;
}

.compare-list tfoot td:last-child {
    font-weight: 600;
}

.expand {
    position: absolute;
    left: 50%;
    top: 1px;
    width: 31px;
    height: 13px;
    padding: 0;
    border: none;
    background-color: #fff;
    box-shadow: 0 0 3px #aaa;
    line-height: 0;
}

/* Charts */
.chart {
    display: block;
    width: 100%;
    font-size: 11px;
}

.chart text {
    fill: #444;
}

.chart .y-labels text {
    fill: #bbb;
    text-anchor: end;
}

.chart .x-labels text {
    fill: #666;
    text-anchor: middle;
}

.grid,
.axis {
    fill: none;
    stroke: #ccc;
}

.soft {
    stroke: #e5e5e5;
    stroke-width: 2;
}

.line {
    fill: none;
    stroke-width: 2;
}

.ring circle {
    fill: none;
}

/* Maps */
.land {
    fill: #eee;
    stroke: #999;
    stroke-width: 2;
    stroke-linejoin: round;
}

.border {
    fill: none;
    stroke: #999;
    stroke-width: 2;
    stroke-linejoin: round;
}

.hit {
    fill: #4bb8ff;
    stroke: #888;
    stroke-width: 1;
}

.thumb-frame {
    fill: #fff;
    stroke: #bbb;
    stroke-width: 3;
}

.thumb-active {
    fill: #fff;
    stroke: #28a3ef;
    stroke-width: 4;
}
```
